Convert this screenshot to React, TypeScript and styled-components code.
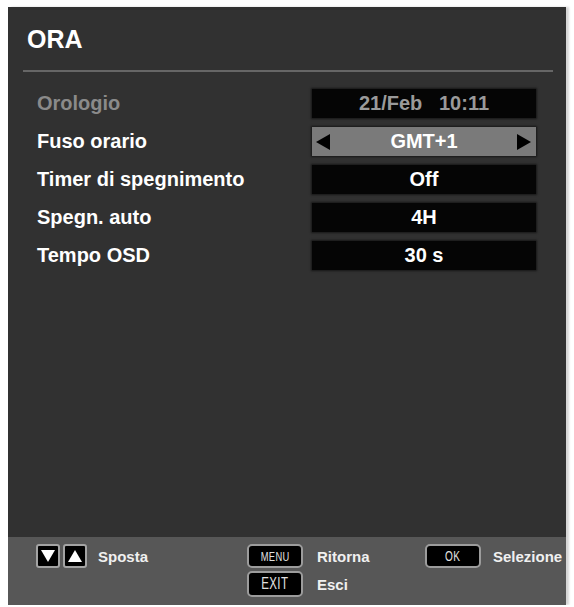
import React from "react";
import styled, { createGlobalStyle } from "styled-components";

const GlobalStyle = createGlobalStyle`
  html, body {
    margin: 0;
    background: #ffffff;
  }
  body {
    font-family: "Liberation Sans", Arial, sans-serif;
  }
`;

const Screen = styled.div`
  margin: 7px 0 0 8px;
  width: 558px;
  height: 598px;
  background: #313131;
  display: flex;
  flex-direction: column;
  box-shadow: 3px 0 2px #d6d6d6;
`;

const Header = styled.div`
  padding: 20px 13px 0 15px;
`;

const Title = styled.h1`
  margin: 0 0 0 4px;
  font-size: 25px;
  line-height: 25px;
  font-weight: bold;
  color: #ffffff;
`;

const Divider = styled.div`
  margin-top: 18px;
  height: 2px;
  background: #666666;
`;

const List = styled.div`
  margin-top: 17px;
  display: flex;
  flex-direction: column;
  gap: 9px;
`;

const Row = styled.div`
  display: grid;
  grid-template-columns: 1fr 224px;
  align-items: center;
  height: 29px;
  padding: 0 30px 0 29px;
`;

const Label = styled.span<{ $disabled?: boolean }>`
  font-size: 20px;
  font-weight: bold;
  color: ${(p) => (p.$disabled ? "#8a8a8a" : "#ffffff")};
`;

const Value = styled.div<{ $active?: boolean; $disabled?: boolean }>`
  height: 29px;
  display: grid;
  grid-template-columns: 22px 1fr 22px;
  align-items: center;
  background: ${(p) => (p.$active ? "#7a7a7a" : "#050505")};
  box-shadow: 0 0 2px 1px rgba(0, 0, 0, 0.55);
  font-size: 20px;
  font-weight: bold;
  color: ${(p) => (p.$disabled ? "#9a9a9a" : "#ffffff")};
`;

const ValueText = styled.span`
  grid-column: 2;
  text-align: center;
  white-space: pre;
`;

const Arrow = styled.svg<{ $side: "left" | "right" }>`
  grid-column: ${(p) => (p.$side === "left" ? 1 : 3)};
  justify-self: ${(p) => (p.$side === "left" ? "start" : "end")};
  margin: 0 4px 0 3px;
  width: 16px;
  height: 16px;
`;

const Footer = styled.div`
  margin-top: auto;
  height: 68px;
  box-sizing: border-box;
  background: #575757;
  padding: 7px 0 0 28px;
  display: grid;
  grid-template-columns: 211px 178px auto;
  align-items: start;
`;

const Group = styled.div<{ $gap: number }>`
  display: flex;
  align-items: center;
  gap: ${(p) => p.$gap}px;
`;

const Stack = styled.div`
  display: flex;
  flex-direction: column;
  gap: 3px;
`;

const NavKeys = styled.div`
  display: flex;
  gap: 3px;
`;

const NavKey = styled.div`
  width: 24px;
  height: 24px;
  box-sizing: border-box;
  border: 2px solid #a3a3a3;
  border-radius: 3px;
  background: #000000;
  display: flex;
  align-items: center;
  justify-content: center;
`;

const Key = styled.div<{ $tall?: boolean }>`
  width: 56px;
  height: ${(p) => (p.$tall ? 26 : 24)}px;
  box-sizing: border-box;
  border: 2px solid #9c9c9c;
  border-radius: 5px;
  background: #000000;
  display: flex;
  align-items: center;
  justify-content: center;
`;

const KeyText = styled.span<{ $size: number }>`
  display: inline-block;
  font-family: "Liberation Sans Narrow", "Liberation Sans", sans-serif;
  font-size: ${(p) => p.$size}px;
  color: #e0e0e0;
  transform: scaleX(0.72);
  letter-spacing: 0.5px;
`;

const HintText = styled.span`
  font-size: 15px;
  font-weight: bold;
  color: #f0f0f0;
`;

const rows = [
  { label: "Orologio", value: "21/Feb   10:11", disabled: true },
  { label: "Fuso orario", value: "GMT+1", active: true },
  { label: "Timer di spegnimento", value: "Off" },
  { label: "Spegn. auto", value: "4H" },
  { label: "Tempo OSD", value: "30 s" },
];

const Triangle = ({ dir }: { dir: "down" | "up" }) => (
  <svg width="16" height="14" viewBox="0 0 16 14">
    {dir === "down" ? (
      <polygon points="1,1 15,1 8,13" fill="#ffffff" />
    ) : (
      <polygon points="8,1 15,13 1,13" fill="#ffffff" />
    )}
  </svg>
);

export default function App() {
  return (
    <>
      <GlobalStyle />
      <Screen>
        <Header>
          <Title>ORA</Title>
          <Divider />
        </Header>
        <List>
          {rows.map((r) => (
            <Row key={r.label}>
              <Label $disabled={r.disabled}>{r.label}</Label>
              <Value $active={r.active} $disabled={r.disabled}>
                {r.active && (
                  <Arrow $side="left" viewBox="0 0 16 16">
                    <polygon points="15,0 15,16 1,8" fill="#000000" />
                  </Arrow>
                )}
                <ValueText>{r.value}</ValueText>
                {r.active && (
                  <Arrow $side="right" viewBox="0 0 16 16">
                    <polygon points="1,0 1,16 15,8" fill="#000000" />
                  </Arrow>
                )}
              </Value>
            </Row>
          ))}
        </List>
        <Footer>
          <Group $gap={11}>
            <NavKeys>
              <NavKey>
                <Triangle dir="down" />
              </NavKey>
              <NavKey>
                <Triangle dir="up" />
              </NavKey>
            </NavKeys>
            <HintText>Sposta</HintText>
          </Group>
          <Stack>
            <Group $gap={14}>
              <Key>
                <KeyText $size={13}>MENU</KeyText>
              </Key>
              <HintText>Ritorna</HintText>
            </Group>
            <Group $gap={14}>
              <Key $tall>
                <KeyText $size={16}>EXIT</KeyText>
              </Key>
              <HintText>Esci</HintText>
            </Group>
          </Stack>
          <Group $gap={12}>
            <Key>
              <KeyText $size={14}>OK</KeyText>
            </Key>
            <HintText>Selezione</HintText>
          </Group>
        </Footer>
      </Screen>
    </>
  );
}
